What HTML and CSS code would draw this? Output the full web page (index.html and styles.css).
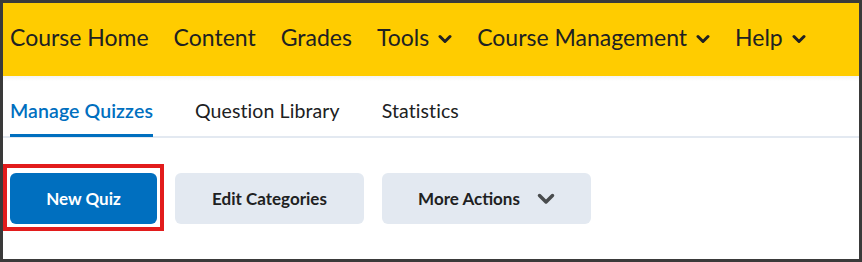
FILE: index.html
```html
<!DOCTYPE html>
<html lang="en">

<head>
    <meta charset="UTF-8">
    <meta name="viewport" content="width=device-width, initial-scale=1.0">
    <title>Quizzes</title>
    <link rel="stylesheet" href="styles.css">
</head>

<body>
    <div class="frame">
        <nav class="navbar">
            <a class="nav-item">Course Home</a>
            <a class="nav-item">Content</a>
            <a class="nav-item">Grades</a>
            <a class="nav-item">Tools
                <svg class="nav-chev" viewBox="0 0 14 10"><path d="M2 2.5 L7 7.5 L12 2.5" /></svg>
            </a>
            <a class="nav-item">Course Management
                <svg class="nav-chev" viewBox="0 0 14 10"><path d="M2 2.5 L7 7.5 L12 2.5" /></svg>
            </a>
            <a class="nav-item">Help
                <svg class="nav-chev" viewBox="0 0 14 10"><path d="M2 2.5 L7 7.5 L12 2.5" /></svg>
            </a>
        </nav>

        <div class="tabs">
            <a class="tab active">Manage Quizzes</a>
            <a class="tab">Question Library</a>
            <a class="tab">Statistics</a>
        </div>

        <div class="actions">
            <div class="highlight">
                <button class="btn btn-primary">New Quiz</button>
            </div>
            <button class="btn">Edit Categories</button>
            <button class="btn btn-more">More Actions
                <svg class="btn-chev" viewBox="0 0 18 12"><path d="M2.5 2.5 L9 9 L15.5 2.5" /></svg>
            </button>
        </div>
    </div>
</body>

</html>
```

FILE: styles.css
```css
body {
    font-family: Lato, "Open Sans", sans-serif;
    margin: 0;
    padding: 0;
    background-color: #ffffff;
    color: #202122;
}

.frame {
    width: 862px;
    height: 262px;
    box-sizing: border-box;
    border: 3px solid #3a3a3a;
    background-color: #ffffff;
    overflow: hidden;
}

.navbar {
    height: 73px;
    background-color: #ffcc00;
    display: flex;
    align-items: center;
    gap: 25px;
    padding-left: 7px;
    padding-bottom: 5px;
    box-sizing: border-box;
}

.nav-item {
    font-size: 23px;
    color: #202122;
    display: flex;
    align-items: center;
    gap: 9px;
    white-space: nowrap;
}

.nav-chev {
    width: 14px;
    height: 10px;
    margin-top: 3px;
}

.nav-chev path {
    fill: none;
    stroke: #202122;
    stroke-width: 3;
    stroke-linecap: round;
    stroke-linejoin: round;
}

.tabs {
    display: flex;
    gap: 42px;
    height: 62px;
    box-sizing: border-box;
    border-bottom: 2px solid #e3e9f1;
    background: linear-gradient(#f4f4f4, #ffffff 5px);
    padding-left: 7px;
}

.tab {
    font-size: 19.5px;
    color: #202122;
    display: flex;
    align-items: center;
    padding-top: 7px;
    box-sizing: border-box;
    height: 61px;
    letter-spacing: 0.1px;
}

.tab.active {
    color: #006fbf;
    font-weight: 600;
    border-bottom: 3px solid #006fbf;
    padding-top: 10px;
}

.actions {
    display: flex;
    gap: 18px;
    padding-left: 7px;
    margin-top: 35px;
}

.highlight {
    position: relative;
}

.highlight::before {
    content: "";
    position: absolute;
    left: -7px;
    top: -9px;
    right: -7px;
    bottom: -7px;
    border: 4px solid #e21c1c;
}

.btn {
    font-family: Lato, "Open Sans", sans-serif;
    font-size: 17px;
    font-weight: 700;
    color: #202122;
    background-color: #e3e9f1;
    border: none;
    border-radius: 6px;
    height: 51px;
    width: 189px;
    padding: 0;
    display: flex;
    align-items: center;
    justify-content: center;
    cursor: pointer;
}

.btn-primary {
    background-color: #006fbf;
    color: #ffffff;
    width: 147px;
}

.btn-more {
    width: 209px;
    gap: 17px;
}

.btn-chev {
    width: 18px;
    height: 12px;
}

.btn-chev path {
    fill: none;
    stroke: #494c4e;
    stroke-width: 3.5;
    stroke-linecap: round;
    stroke-linejoin: round;
}
```
